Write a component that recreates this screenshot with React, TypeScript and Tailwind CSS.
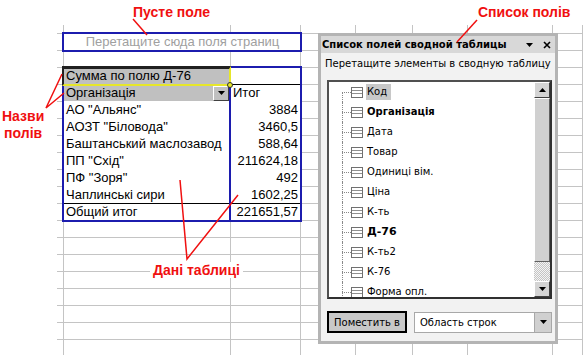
import { twMerge } from 'tailwind-merge';
import type { ReactNode } from 'react';

const colW = ['w-[7px]', 'w-[167px]', 'w-[70px]', 'w-[55px]', 'w-[57px]', 'w-[55px]', 'w-[85px]', 'flex-1'];

const data = [
  ['АО "Альянс"', '3884'],
  ['АОЗТ "Біловода"', '3460,5'],
  ['Баштанський маслозавод', '588,64'],
  ['ПП "Схід"', '211624,18'],
  ['ПФ "Зоря"', '492'],
  ['Чаплинські сири', '1602,25'],
  ['Общий итог', '221651,57'],
];

const fields = ['Код', 'Організація', 'Дата', 'Товар', 'Одиниці вім.', 'Ціна', 'К-ть', 'Д-76', 'К-ть2', 'К-76', 'Форма опл.'];
const boldFields = ['Організація', 'Д-76'];

function Down({ className = '' }: { className?: string }) {
  return (
    <svg width="7" height="4" viewBox="0 0 7 4" className={className}>
      <polygon points="0,0 7,0 3.5,4" fill="#000" />
    </svg>
  );
}

function Up() {
  return (
    <svg width="7" height="4" viewBox="0 0 7 4">
      <polygon points="0,4 7,4 3.5,0" fill="#000" />
    </svg>
  );
}

function FieldIcon() {
  return (
    <svg width="12" height="11" viewBox="0 0 12 11" className="shrink-0">
      <rect x="0.5" y="0.5" width="11" height="10" fill="#fff" stroke="#707070" />
      <line x1="1" y1="3.5" x2="11" y2="3.5" stroke="#909090" />
      <line x1="1" y1="6.5" x2="11" y2="6.5" stroke="#909090" />
    </svg>
  );
}

// content + overrides for a given sheet cell
function cellFor(r: number, c: number): { cls?: string; node?: ReactNode } {
  if (r === 1 && c === 1)
    return {
      cls: 'border-r-0 overflow-visible',
      node: (
        <div className="w-[237px] text-center text-[#a0a0a0] whitespace-nowrap">Перетащите сюда поля страниц</div>
      ),
    };
  if (r === 3 && c === 1) return { cls: 'bg-[#c0c0c0]', node: <span className="pl-[2px]">Сумма по полю Д-76</span> };
  if (r === 3 && c === 2) return { cls: 'border-b-black' };
  if (r === 4 && c === 1)
    return {
      cls: 'bg-[#c0c0c0] flex items-center justify-between border-b-white',
      node: (
        <>
          <span className="pl-[2px]">Організація</span>
          <div className="w-[16px] h-[15px] mr-[1px] flex items-center justify-center bg-[#c0c0c0] border border-t-white border-l-white border-r-[#404040] border-b-[#404040]">
            <Down />
          </div>
        </>
      ),
    };
  if (r === 4 && c === 2) return { cls: 'border-b-white', node: <span className="pl-[2px]">Итог</span> };
  if (r >= 5 && r <= 11 && c === 1)
    return {
      cls: r === 10 ? 'border-b-black' : r < 10 ? 'border-b-white' : '',
      node: <span className="pl-[2px] whitespace-nowrap">{data[r - 5][0]}</span>,
    };
  if (r >= 5 && r <= 11 && c === 2)
    return {
      cls: twMerge('text-right pr-[2px]', r === 10 ? 'border-b-black' : r < 10 ? 'border-b-white' : ''),
      node: data[r - 5][1],
    };
  return {};
}

function Sheet() {
  const rowCount = 21;
  return (
    <div className="pl-[57px] pt-[25px] flex flex-col font-['Liberation_Sans',Arial,sans-serif] text-[13px] leading-[16px] text-black">
      {Array.from({ length: rowCount }).map((_, r) => (
        <div key={r} className={twMerge('flex', r === 0 ? 'h-[9px]' : 'h-[17px]')}>
          {colW.map((w, c) => {
            const { cls, node } = cellFor(r, c);
            return (
              <div
                key={c}
                className={twMerge('h-full shrink-0 border-r border-b border-[#c4c4c4] overflow-hidden', w, cls)}
              >
                {node}
              </div>
            );
          })}
        </div>
      ))}
    </div>
  );
}

function FieldList() {
  return (
    <div className="absolute left-[318px] top-[33px] w-[240px] h-[311px] border-[3px] border-[#b4b4b4] bg-[#f2f2f2] flex flex-col font-['DejaVu_Sans',sans-serif] text-[10px] text-black">
      <div className="h-[17px] bg-[#d8d8d8] flex items-center pl-[1px] pr-[4px]">
        <span className="font-bold text-[10px]">Список полей сводной таблицы</span>
        <div className="flex-1" />
        <Down className="mr-[10px]" />
        <svg width="8" height="8" viewBox="0 0 8 8">
          <path d="M1 1 L7 7 M7 1 L1 7" stroke="#000" strokeWidth="1.6" />
        </svg>
      </div>
      <div className="mt-[4px] h-[14px] leading-[14px] pl-[4px] whitespace-nowrap">Перетащите элементы в сводную таблицу</div>
      <div className="mt-[9px] ml-[6px] w-[225px] h-[219px] border-2 border-t-[#505050] border-l-[#505050] border-r-[#303030] border-b-[#303030] bg-white flex">
        <div className="flex-1 flex flex-col overflow-hidden">
          {fields.map((f, i) => (
            <div key={f} className="h-[20px] shrink-0 flex items-center">
              <div className="w-[13px]" />
              <div className="relative w-[9px] h-full">
                <div
                  className={twMerge(
                    'absolute left-0 border-l border-dotted border-[#888]',
                    i === 0 ? 'top-[10px] bottom-0' : 'top-0 bottom-0'
                  )}
                />
                <div className="absolute left-0 top-[10px] w-[9px] border-t border-dotted border-[#888]" />
              </div>
              <FieldIcon />
              <span
                className={twMerge(
                  'ml-[3px] px-[1px] leading-[16px] whitespace-nowrap',
                  i === 0 ? 'bg-[#c8c8c8] pr-[4px]' : '',
                  boldFields.includes(f) ? 'font-bold' : '',
                  f === 'Д-76' ? 'text-[11px]' : ''
                )}
              >
                {f}
              </span>
            </div>
          ))}
        </div>
        <div className="w-[16px] flex flex-col">
          <div className="h-[16px] bg-[#d4d4d4] border border-t-white border-l-white border-r-[#404040] border-b-[#404040] flex items-center justify-center">
            <Up />
          </div>
          <div className="h-[164px] bg-[#d0d0d0] border border-t-white border-l-white border-r-[#606060] border-b-[#606060]" />
          <div className="flex-1 bg-[repeating-conic-gradient(#c4c4c4_0%_25%,#f4f4f4_0%_50%)] bg-[length:2px_2px]" />
          <div className="h-[16px] bg-[#d4d4d4] border border-t-white border-l-white border-r-[#404040] border-b-[#404040] flex items-center justify-center">
            <Down />
          </div>
        </div>
      </div>
      <div className="mt-[12px] ml-[6px] flex items-center">
        <div className="w-[80px] h-[22px] border-2 border-black bg-[#c8c8c8] flex items-center justify-center text-[10px]">
          Поместить в
        </div>
        <div className="ml-[7px] w-[138px] h-[21px] border border-[#a8a8a8] bg-white flex items-center">
          <span className="flex-1 pl-[5px] text-[10px]">Область строк</span>
          <div className="w-[17px] h-full bg-[#d0d0d0] border-l border-[#a8a8a8] flex items-center justify-center">
            <Down />
          </div>
        </div>
      </div>
    </div>
  );
}

function Notes() {
  const label = "absolute font-['Liberation_Sans',Arial,sans-serif] font-bold text-[14px] leading-[16px] text-[#f01010] whitespace-nowrap";
  return (
    <>
      <svg className="absolute inset-0 pointer-events-none" width="583" height="355">
        <g stroke="#f01010" strokeWidth="1.5" fill="none">
          <line x1="133" y1="19" x2="147" y2="35" />
          <polyline points="62,74 46,108 64,93" />
          <polyline points="180,180 187,259 238,195" />
          <line x1="477" y1="20" x2="457" y2="42" />
        </g>
      </svg>
      <div className={label + ' left-[133px] top-[4px]'}>Пусте поле</div>
      <div className={label + ' left-[478px] top-[4px]'}>Список полів</div>
      <div className={label + ' left-[2px] top-[108px] leading-[17px] text-center'}>
        Назви
        <br />
        полів
      </div>
      <div className={label + ' left-[150px] top-[262px] bg-white px-[3px]'}>Дані таблиці</div>
    </>
  );
}

export default function App() {
  return (
    <div className="relative w-[583px] h-[355px] overflow-hidden bg-white">
      <Sheet />
      {/* pivot outlines */}
      <div className="absolute left-[62px] top-[32px] w-[240px] h-[20px] border-2 border-[#1c1cae]" />
      <div className="absolute left-[62px] top-[66px] w-[240px] h-[156px] border-2 border-[#1c1cae]" />
      <div className="absolute left-[229px] top-[66px] w-[2px] h-[156px] bg-[#1c1cae]" />
      <div className="absolute left-[62px] top-[66px] w-[169px] h-[20px] border-t-[3px] border-l-2 border-r-2 border-b-2 border-t-[#202020] border-l-[#202020] border-r-[#e6e62a] border-b-[#e6e62a]" />
      <div className="absolute left-[227px] top-[82px] w-[6px] h-[6px] rounded-full border border-[#303030] bg-[#e6e62a]" />
      <FieldList />
      <Notes />
    </div>
  );
}
